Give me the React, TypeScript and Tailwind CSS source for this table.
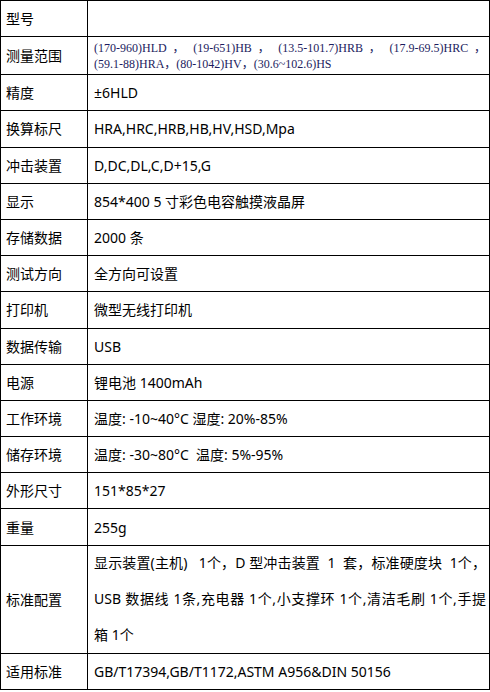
const rows: [string, string][] = [
  ["型号", ""],
  ["测量范围", "__range__"],
  ["精度", "±6HLD"],
  ["换算标尺", "HRA,HRC,HRB,HB,HV,HSD,Mpa"],
  ["冲击装置", "D,DC,DL,C,D+15,G"],
  ["显示", "854*400 5 寸彩色电容触摸液晶屏"],
  ["存储数据", "2000 条"],
  ["测试方向", "全方向可设置"],
  ["打印机", "微型无线打印机"],
  ["数据传输", "USB"],
  ["电源", "锂电池 1400mAh"],
  ["工作环境", "温度: -10~40°C 湿度: 20%-85%"],
  ["储存环境", "温度: -30~80°C\u00a0 温度: 5%-95%"],
  ["外形尺寸", "151*85*27"],
  ["重量", "255g"],
  ["标准配置", "__config__"],
  ["适用标准", "GB/T17394,GB/T1172,ASTM A956&DIN 50156"],
];

function Value({ v }: { v: string }) {
  if (v === "__range__") {
    return (
      <div className="font-['Liberation_Serif','Noto_Sans_CJK_SC',serif] text-[12px] leading-[16px] text-[#1c1c5e]">
        <div className="text-justify [text-align-last:justify]">
          (170-960)HLD ， (19-651)HB ， (13.5-101.7)HRB ， (17.9-69.5)HRC ，
        </div>
        <div>(59.1-88)HRA，(80-1042)HV，(30.6~102.6)HS</div>
      </div>
    );
  }
  if (v === "__config__") {
    return (
      <div className="leading-[36px]">
        <div className="text-justify [text-align-last:justify]">
          显示装置(主机)&nbsp;&nbsp; 1个，D 型冲击装置 &nbsp;1 &nbsp;套，标准硬度块 &nbsp;1个，
        </div>
        <div className="text-justify [text-align-last:justify]">
          USB 数据线 1条,充电器 1个,小支撑环 1个,清洁毛刷 1个,手提
        </div>
        <div>箱 1个</div>
      </div>
    );
  }
  return <div>{v}</div>;
}

export default function App() {
  return (
    <div className="w-[490px] bg-white font-['Noto_Sans','Noto_Sans_CJK_SC',sans-serif] text-[14px] text-black">
      <div className="border-l border-r border-t border-black">
        {rows.map(([k, v], i) => (
          <div
            key={i}
            className={
              "flex border-b border-black " +
              (v === "__range__"
                ? "h-[38px]"
                : v === "__config__"
                ? "h-[108px]"
                : "h-[36.2px]")
            }
          >
            <div className="flex w-[87px] shrink-0 items-center border-r border-black pl-[5px]">
              {k}
            </div>
            <div className="flex min-w-0 flex-1 items-center pl-[6px] pr-[3px]">
              <div className="w-full">
                <Value v={v} />
              </div>
            </div>
          </div>
        ))}
      </div>
    </div>
  );
}
